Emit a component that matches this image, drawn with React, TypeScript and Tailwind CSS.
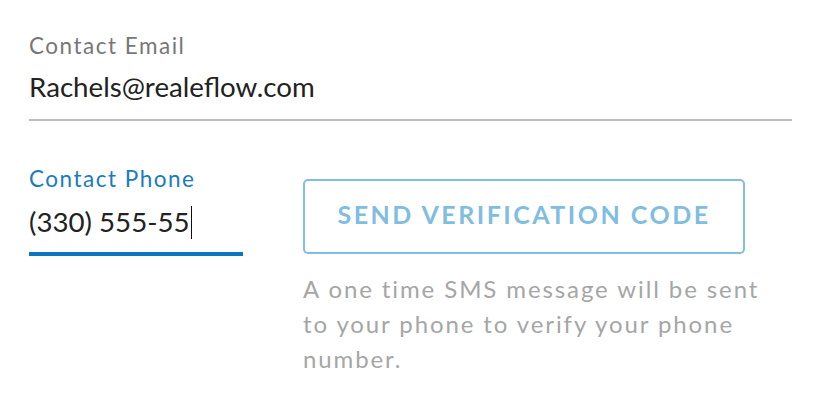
export default function App() {
  return (
    <div className="min-h-screen bg-white pl-[29px] pr-[26px] pt-[34px]" style={{ fontFamily: "Lato, sans-serif" }}>
      <div className="text-[22.5px] leading-[24px] tracking-[1.5px] text-[#777777]">Contact Email</div>
      <div className="mt-[11px] border-b-2 border-[#bdbdbd] pb-[14px]">
        <div className="text-[27.7px] leading-[36px] text-[#222222]">Rachels@realeflow.com</div>
      </div>
      <div className="mt-[46px] flex items-start">
        <div className="w-[214px]">
          <div className="text-[22.5px] leading-[24px] tracking-[1.5px] text-[#1a7bbf]">Contact Phone</div>
          <div className="mt-[13px] border-b-4 border-[#0a78bf] pb-[12px]">
            <div className="flex items-center text-[27.7px] leading-[36px] text-[#222222]">
              <span>(330) 555-55</span>
              <span className="ml-px inline-block h-[33px] w-px bg-[#111111]" />
            </div>
          </div>
        </div>
        <div className="ml-[60px] pt-[12px]">
          <button className="flex h-[75px] w-[442px] items-center justify-center rounded-[5px] border-2 border-[#7fbde2] bg-white pb-[3px] text-[25px] font-bold tracking-[2.5px] text-[#7fbde2]">
            SEND VERIFICATION CODE
          </button>
          <p className="mt-[17px] w-[478px] text-[24px] leading-[35px] tracking-[1.9px] text-[#a6a6a6]">
            A one time SMS message will be sent to your phone to verify your phone number.
          </p>
        </div>
      </div>
    </div>
  );
}
